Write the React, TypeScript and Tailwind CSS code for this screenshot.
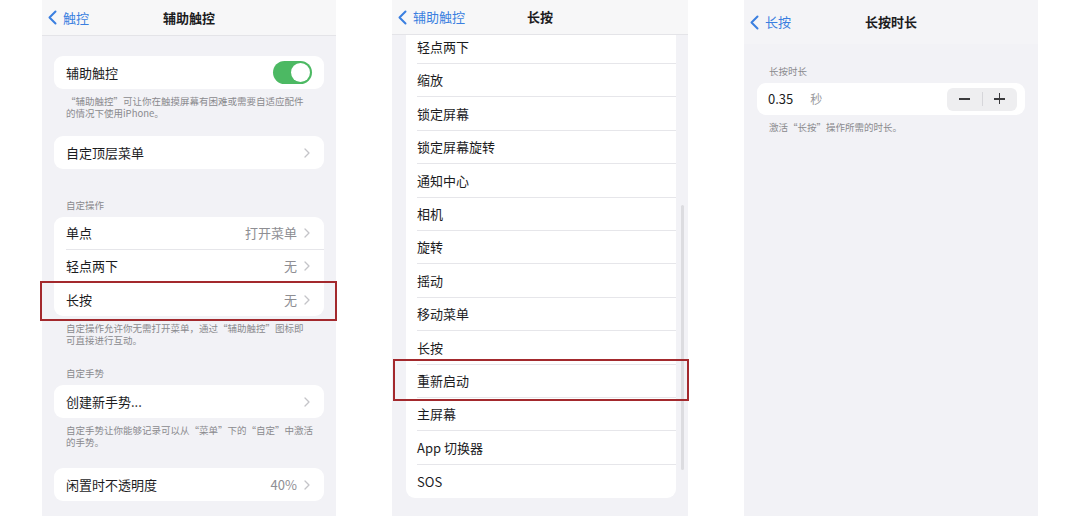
import React from "react";

const FONT = { fontFamily: '"Noto Sans CJK SC", "Noto Sans", sans-serif' };

function Chevron() {
  return (
    <svg width="6" height="10" viewBox="0 0 6 10" className="shrink-0">
      <polyline points="1,1 5,5 1,9" fill="none" stroke="#c4c4c8" strokeWidth="1.3" strokeLinecap="round" strokeLinejoin="round" />
    </svg>
  );
}

function BackChevron() {
  return (
    <svg width="9" height="15" viewBox="0 0 9 15" className="shrink-0">
      <polyline points="7.5,1.5 1.5,7.5 7.5,13.5" fill="none" stroke="#3a7fe0" strokeWidth="2" strokeLinecap="round" strokeLinejoin="round" />
    </svg>
  );
}

function Row({ label, value, chevron = true, border = false }: { label: string; value?: string; chevron?: boolean; border?: boolean }) {
  return (
    <div className="flex h-[33px] items-center pl-[12px]">
      <div className={"flex h-full flex-1 items-center pr-[14px] " + (border ? "border-b border-[#e6e6ea]" : "")}>
        <span className="flex-1 text-[13px] text-[#1c1c1e]">{label}</span>
        {value && <span className="mr-[7px] text-[13px] text-[#8e8e93]">{value}</span>}
        {chevron && <Chevron />}
      </div>
    </div>
  );
}

function Foot({ lines }: { lines: string[] }) {
  return (
    <div className="whitespace-nowrap px-[12px] pt-[6px] text-[9.5px] leading-[12px] text-[#8a8a8e]">
      {lines.map((l, i) => (
        <div key={i}>{l}</div>
      ))}
    </div>
  );
}

function Section({ text }: { text: string }) {
  return <div className="px-[12px] pb-[6px] text-[9.5px] leading-[12px] text-[#8a8a8e]">{text}</div>;
}

function Panel1() {
  return (
    <div className="relative ml-[42px] h-full w-[294px] bg-[#f2f2f6]">
      <div className="relative flex h-[36px] items-center border-b border-[#e4e4e8] bg-[#f7f7f8] pl-[6px]">
        <BackChevron />
        <span className="ml-[6px] text-[13px] text-[#3a7fe0]">触控</span>
        <span className="absolute left-0 right-0 text-center text-[13px] font-bold text-[#1c1c1e]">辅助触控</span>
      </div>
      <div className="px-[12px]">
        <div className="mt-[20px] flex h-[33px] items-center rounded-[9px] bg-white pl-[12px] pr-[12px]">
          <span className="flex-1 text-[13px] text-[#1c1c1e]">辅助触控</span>
          <div className="flex h-[23px] w-[39px] items-center justify-end rounded-full bg-[#4cb963] pr-[2px]">
            <div className="h-[19px] w-[19px] rounded-full bg-white" />
          </div>
        </div>
        <Foot lines={["“辅助触控”可让你在触摸屏幕有困难或需要自适应配件", "的情况下使用iPhone。"]} />
        <div className="mt-[17px] rounded-[9px] bg-white">
          <Row label="自定顶层菜单" />
        </div>
        <div className="mt-[30px]">
          <Section text="自定操作" />
        </div>
        <div className="rounded-[9px] bg-white">
          <Row label="单点" value="打开菜单" border />
          <Row label="轻点两下" value="无" border />
          <Row label="长按" value="无" />
        </div>
        <Foot lines={["自定操作允许你无需打开菜单，通过“辅助触控”图标即", "可直接进行互动。"]} />
        <div className="mt-[21px]">
          <Section text="自定手势" />
        </div>
        <div className="rounded-[9px] bg-white">
          <Row label="创建新手势..." />
        </div>
        <Foot lines={["自定手势让你能够记录可以从“菜单”下的“自定”中激活", "的手势。"]} />
        <div className="mt-[20px] rounded-[9px] bg-white">
          <Row label="闲置时不透明度" value="40%" />
        </div>
      </div>
      <div className="absolute left-[-2px] top-[281px] h-[40px] w-[297px] border-2 border-[#a3292d]" />
    </div>
  );
}

const items2 = ["缩放", "锁定屏幕", "锁定屏幕旋转", "通知中心", "相机", "旋转", "摇动", "移动菜单", "长按", "重新启动", "主屏幕", "App 切换器", "SOS"];

function Panel2() {
  return (
    <div className="relative ml-[56px] flex h-full w-[296px] flex-col bg-[#f2f2f6]">
      <div className="relative flex h-[35px] shrink-0 items-center border-b border-[#e4e4e8] bg-[#f7f7f8] pl-[6px]">
        <BackChevron />
        <span className="ml-[6px] text-[13px] text-[#3a7fe0]">辅助触控</span>
        <span className="absolute left-0 right-0 text-center text-[13px] font-bold text-[#1c1c1e]">长按</span>
      </div>
      <div className="ml-[14px] mr-[12px] rounded-b-[9px] bg-white">
        <div className="flex h-[29px] items-center pl-[11px]">
          <div className="flex h-full flex-1 items-center border-b border-[#e6e6ea] pb-[4px]">
            <span className="text-[13px] text-[#1c1c1e]">轻点两下</span>
          </div>
        </div>
        {items2.map((t, i) => (
          <div key={t} className="flex h-[33.4px] items-center pl-[11px]">
            <div className={"flex h-full flex-1 items-center " + (i < items2.length - 1 ? "border-b border-[#e6e6ea]" : "")}>
              <span className="text-[13px] text-[#1c1c1e]">{t}</span>
            </div>
          </div>
        ))}
      </div>
      <div className="absolute left-[289px] top-[205px] h-[265px] w-[3px] rounded-full bg-[#dcdce0]" />
      <div className="absolute left-[1px] top-[359px] h-[42px] w-[296px] border-2 border-[#a3292d]" />
    </div>
  );
}

function Panel3() {
  return (
    <div className="relative ml-[56px] h-full w-[294px] bg-[#f2f2f6]">
      <div className="relative flex h-[44px] items-center bg-[#f4f4f7] pl-[6px]">
        <BackChevron />
        <span className="ml-[6px] text-[13px] text-[#3a7fe0]">长按</span>
        <span className="absolute left-0 right-0 text-center text-[13px] font-bold text-[#1c1c1e]">长按时长</span>
      </div>
      <div className="pl-[13px] pr-[13px]">
        <div className="mt-[21px]">
          <Section text="长按时长" />
        </div>
        <div className="flex h-[32px] items-center rounded-[9px] bg-white pl-[11px] pr-[8px]">
          <span className="text-[13px] text-[#1c1c1e]">0.35</span>
          <span className="ml-[17px] flex-1 text-[12px] text-[#9a9a9e]">秒</span>
          <div className="flex h-[23px] w-[70px] items-center rounded-[6px] bg-[#eeeef0]">
            <div className="flex h-[14px] flex-1 items-center justify-center border-r border-[#d6d6da]">
              <div className="h-[1.3px] w-[11px] bg-[#3a3a3c]" />
            </div>
            <div className="relative flex flex-1 items-center justify-center">
              <div className="h-[1.3px] w-[11px] bg-[#3a3a3c]" />
              <div className="absolute h-[11px] w-[1.3px] bg-[#3a3a3c]" />
            </div>
          </div>
        </div>
        <Foot lines={["激活“长按”操作所需的时长。"]} />
      </div>
    </div>
  );
}

export default function App() {
  return (
    <div className="flex h-[516px] w-[1080px] overflow-hidden bg-white" style={FONT}>
      <Panel1 />
      <Panel2 />
      <Panel3 />
    </div>
  );
}
